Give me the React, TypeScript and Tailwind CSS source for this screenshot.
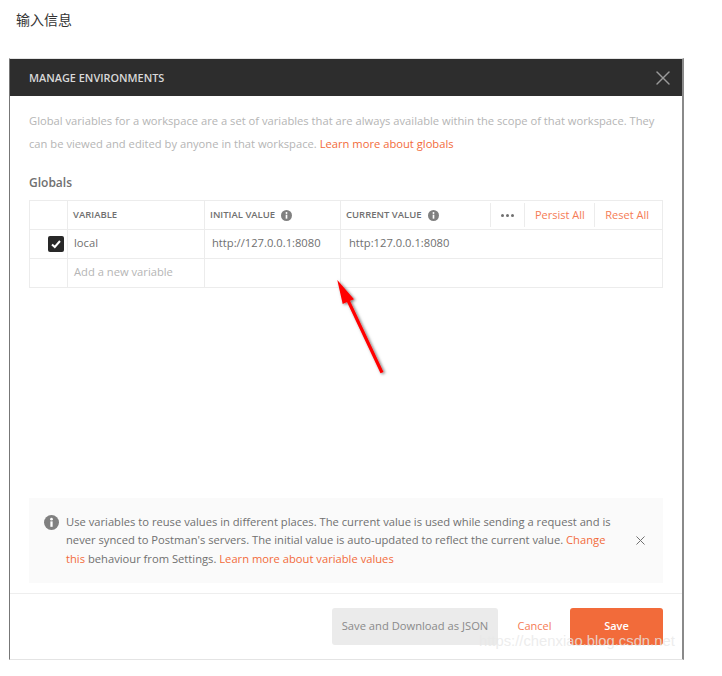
import { X } from 'lucide-react';

function InfoDot({ size }: { size: number }) {
  return (
    <svg width={size} height={size} viewBox="0 0 16 16" className="shrink-0">
      <circle cx="8" cy="8" r="8" fill="#808080" />
      <circle cx="8" cy="4.4" r="1.4" fill="#fff" />
      <rect x="6.8" y="6.8" width="2.4" height="5.8" fill="#fff" />
    </svg>
  );
}

function HeaderCell({ label, info }: { label: string; info?: boolean }) {
  return (
    <div className="flex items-center gap-[6px] pl-[5px] text-[9.5px] font-semibold text-[#707070]">
      <span>{label}</span>
      {info && <InfoDot size={11} />}
    </div>
  );
}

export default function App() {
  return (
    <div className="relative h-[676px] w-[722px] overflow-hidden bg-white font-['Open_Sans',sans-serif]">
      <p className="ml-4 pt-[11px] font-['Noto_Sans_CJK_SC',sans-serif] text-[14px] leading-[16px] text-[#333]">输入信息</p>

      <div className="ml-[9px] mt-[31px] flex h-[602px] w-[675px] flex-col border-y border-r-2 border-l border-y-[#e4e4e4] border-r-[#8a8a8a] border-l-[#777]">
        <div className="flex h-[37px] shrink-0 items-center justify-between bg-[#2d2d2d] pl-[19px] pr-[7px]">
          <span className="pt-[1px] text-[10.9px] font-semibold text-[#d8d8d8]">MANAGE ENVIRONMENTS</span>
          <X size={24} strokeWidth={1.4} className="text-[#9a9a9a]" />
        </div>

        <div className="flex flex-1 flex-col px-[19px]">
          <p className="mt-[14px] w-[634px] text-[11.2px] leading-[22.5px] text-[#b5b5b5]">
            Global variables for a workspace are a set of variables that are always available within the scope of that workspace. They can be viewed and edited by anyone in that workspace.{' '}
            <span className="text-[#f26b3a]">Learn more about globals</span>
          </p>
          <h2 className="mt-[20px] text-[12px] font-semibold leading-[16px] text-[#707070]">Globals</h2>

          <div className="mt-[9px] grid h-[88px] w-[634px] grid-cols-[38px_137px_136px_1fr] grid-rows-[29px_29px_29px] border-t border-l border-[#ececec] text-[11.2px] [&>div]:border-r [&>div]:border-b [&>div]:border-[#ececec]">
            <div />
            <HeaderCell label="VARIABLE" />
            <HeaderCell label="INITIAL VALUE" info />
            <div className="flex items-center justify-between pr-[13px]">
              <HeaderCell label="CURRENT VALUE" info />
              <div className="flex h-[24px] items-center text-[11px] text-[#f57b55]">
                <span className="flex h-full w-[35px] items-center justify-center gap-[2px] border-x border-[#ececec]">
                  <i className="size-[3px] rounded-full bg-[#707070]" />
                  <i className="size-[3px] rounded-full bg-[#707070]" />
                  <i className="size-[3px] rounded-full bg-[#707070]" />
                </span>
                <span className="flex h-full w-[70px] items-center justify-center border-r border-[#ececec]">Persist All</span>
                <span className="pl-[10px]">Reset All</span>
              </div>
            </div>

            <div className="flex items-center justify-end pr-[3px] pb-[1px]">
              <span className="flex size-[16px] items-center justify-center rounded-[2px] bg-[#282828]">
                <svg width="12" height="12" viewBox="0 0 12 12">
                  <path d="M2 6.4 4.8 9 10 3" fill="none" stroke="#fff" strokeWidth="2" />
                </svg>
              </span>
            </div>
            <div className="flex items-center pb-[2px] pl-[6px] text-[#707070]">local</div>
            <div className="flex items-center pb-[2px] pl-[7px] text-[#707070]">http://127.0.0.1:8080</div>
            <div className="flex items-center pb-[2px] pl-[8px] text-[#707070]">http:127.0.0.1:8080</div>

            <div />
            <div className="flex items-center pb-[2px] pl-[6px] text-[#b5b5b5]">Add a new variable</div>
            <div />
            <div />
          </div>

          <div className="mt-auto mb-[10px] flex h-[85px] w-[634px] items-center bg-[#fafafa] pl-[15px] pr-[15px]">
            <div className="flex items-start gap-[7px]">
              <div className="pt-[2px]">
                <InfoDot size={15} />
              </div>
              <p className="w-[548px] text-[11.2px] leading-[18.6px] text-[#707070]">
                Use variables to reuse values in different places. The current value is used while sending a request and is never synced to Postman's servers. The initial value is auto-updated to reflect the current value.{' '}
                <span className="text-[#f26b3a]">Change this</span> behaviour from Settings.{' '}
                <span className="text-[#f26b3a]">Learn more about variable values</span>
              </p>
            </div>
            <X size={15} strokeWidth={1.6} className="ml-auto text-[#707070]" />
          </div>
        </div>

        <div className="flex h-[66px] shrink-0 items-start justify-end border-t border-[#eeeeee] pr-[19px] pt-[14px]">
          <button className="h-[37px] w-[166px] rounded-[3px] bg-[#ebebeb] text-[11.2px] text-[#8a8a8a]">Save and Download as JSON</button>
          <button className="ml-[19px] h-[37px] w-[35px] text-[11px] text-[#f57b55]">Cancel</button>
          <button className="ml-[18px] h-[37px] w-[93px] rounded-[3px] bg-[#f26b3a] text-[11px] font-semibold text-white">Save</button>
        </div>
      </div>

      {/* red arrow pasted over the screenshot */}
      <svg className="absolute left-[330px] top-[275px]" width="64" height="110" viewBox="0 0 64 110">
        <defs>
          <filter id="arrowShadow" x="-30%" y="-30%" width="160%" height="160%">
            <feDropShadow dx="1.5" dy="1" stdDeviation="1.5" floodColor="#000" floodOpacity="0.55" />
          </filter>
        </defs>
        <g filter="url(#arrowShadow)">
          <path d="M7.3 5 12.7 29 17 27 50.5 98.3 53.5 97 20 25.7 24 24.3Z" fill="#f00" />
        </g>
      </svg>

      {/* csdn watermark */}
      <span className="absolute left-[479px] top-[631px] font-['Liberation_Sans',sans-serif] text-[14.8px] leading-[20px] text-[#e8e8e8]/80">https://chenxiao.blog.csdn.net</span>
    </div>
  );
}
